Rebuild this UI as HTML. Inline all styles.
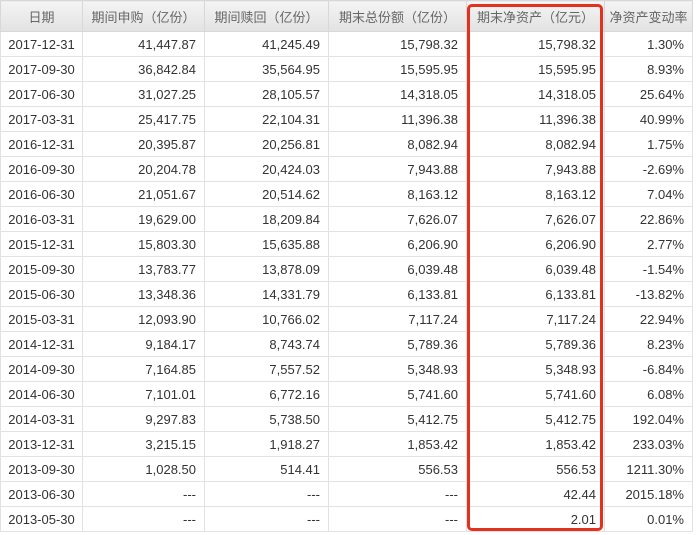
<!DOCTYPE html>
<html><head><meta charset="utf-8"><style>
html,body{margin:0;padding:0;background:#fff;width:700px;height:535px;overflow:hidden}
table{position:absolute;left:0;top:0;border-collapse:collapse;font-family:"Liberation Sans","Noto Sans CJK SC",sans-serif;font-size:13px;color:#333;table-layout:fixed;width:692px}
th{height:30px;background:linear-gradient(#f4f4f4,#e2e2e2);color:#666;font-weight:normal;border:1px solid #d8d8d8;text-align:center;padding:0}
td{height:24px;border:1px solid #e2e2e2;text-align:right;padding:0 8px 0 0}
td:first-child{text-align:center;padding:0}
.box{position:absolute;left:467px;top:4px;width:130px;height:521px;border:3px solid #e3301f;border-radius:5px}
</style></head><body>
<table>
<colgroup><col style="width:82px"><col style="width:122px"><col style="width:124px"><col style="width:138px"><col style="width:138px"><col style="width:88px"></colgroup>
<tr><th>日期</th><th>期间申购（亿份）</th><th>期间赎回（亿份）</th><th>期末总份额（亿份）</th><th>期末净资产（亿元）</th><th>净资产变动率</th></tr>
<tr><td>2017-12-31</td><td>41,447.87</td><td>41,245.49</td><td>15,798.32</td><td>15,798.32</td><td>1.30%</td></tr>
<tr><td>2017-09-30</td><td>36,842.84</td><td>35,564.95</td><td>15,595.95</td><td>15,595.95</td><td>8.93%</td></tr>
<tr><td>2017-06-30</td><td>31,027.25</td><td>28,105.57</td><td>14,318.05</td><td>14,318.05</td><td>25.64%</td></tr>
<tr><td>2017-03-31</td><td>25,417.75</td><td>22,104.31</td><td>11,396.38</td><td>11,396.38</td><td>40.99%</td></tr>
<tr><td>2016-12-31</td><td>20,395.87</td><td>20,256.81</td><td>8,082.94</td><td>8,082.94</td><td>1.75%</td></tr>
<tr><td>2016-09-30</td><td>20,204.78</td><td>20,424.03</td><td>7,943.88</td><td>7,943.88</td><td>-2.69%</td></tr>
<tr><td>2016-06-30</td><td>21,051.67</td><td>20,514.62</td><td>8,163.12</td><td>8,163.12</td><td>7.04%</td></tr>
<tr><td>2016-03-31</td><td>19,629.00</td><td>18,209.84</td><td>7,626.07</td><td>7,626.07</td><td>22.86%</td></tr>
<tr><td>2015-12-31</td><td>15,803.30</td><td>15,635.88</td><td>6,206.90</td><td>6,206.90</td><td>2.77%</td></tr>
<tr><td>2015-09-30</td><td>13,783.77</td><td>13,878.09</td><td>6,039.48</td><td>6,039.48</td><td>-1.54%</td></tr>
<tr><td>2015-06-30</td><td>13,348.36</td><td>14,331.79</td><td>6,133.81</td><td>6,133.81</td><td>-13.82%</td></tr>
<tr><td>2015-03-31</td><td>12,093.90</td><td>10,766.02</td><td>7,117.24</td><td>7,117.24</td><td>22.94%</td></tr>
<tr><td>2014-12-31</td><td>9,184.17</td><td>8,743.74</td><td>5,789.36</td><td>5,789.36</td><td>8.23%</td></tr>
<tr><td>2014-09-30</td><td>7,164.85</td><td>7,557.52</td><td>5,348.93</td><td>5,348.93</td><td>-6.84%</td></tr>
<tr><td>2014-06-30</td><td>7,101.01</td><td>6,772.16</td><td>5,741.60</td><td>5,741.60</td><td>6.08%</td></tr>
<tr><td>2014-03-31</td><td>9,297.83</td><td>5,738.50</td><td>5,412.75</td><td>5,412.75</td><td>192.04%</td></tr>
<tr><td>2013-12-31</td><td>3,215.15</td><td>1,918.27</td><td>1,853.42</td><td>1,853.42</td><td>233.03%</td></tr>
<tr><td>2013-09-30</td><td>1,028.50</td><td>514.41</td><td>556.53</td><td>556.53</td><td>1211.30%</td></tr>
<tr><td>2013-06-30</td><td>---</td><td>---</td><td>---</td><td>42.44</td><td>2015.18%</td></tr>
<tr><td>2013-05-30</td><td>---</td><td>---</td><td>---</td><td>2.01</td><td>0.01%</td></tr>
</table>
<div class="box"></div>
</body></html>
